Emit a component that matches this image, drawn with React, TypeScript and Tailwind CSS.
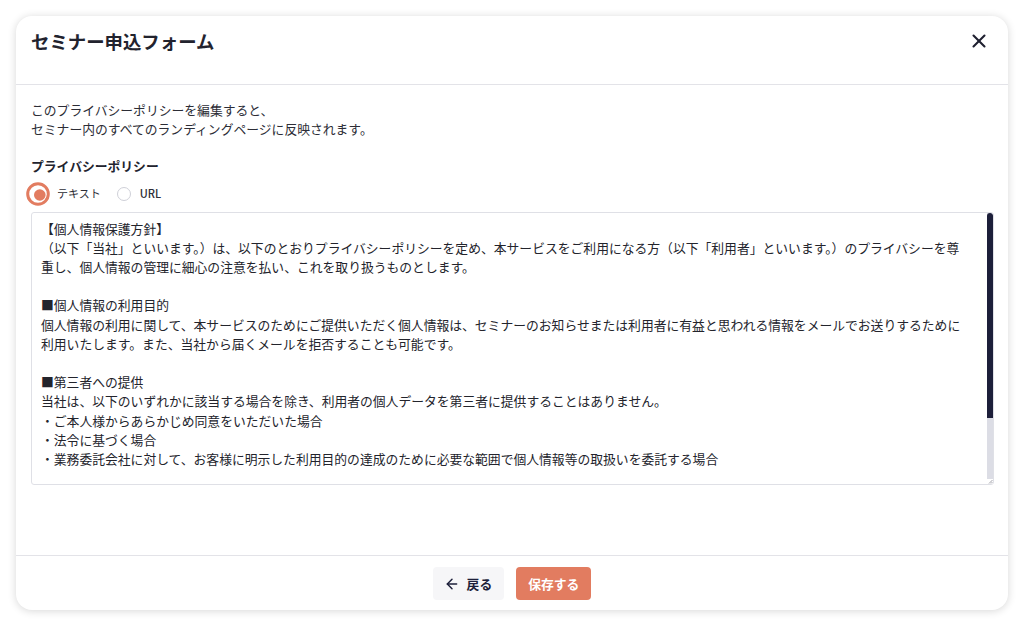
import { ArrowLeft, X } from 'lucide-react'

const POLICY = [
  '【個人情報保護方針】',
  '（以下「当社」といいます。）は、以下のとおりプライバシーポリシーを定め、本サービスをご利用になる方（以下「利用者」といいます。）のプライバシーを尊',
  '重し、個人情報の管理に細心の注意を払い、これを取り扱うものとします。',
  '',
  '■個人情報の利用目的',
  '個人情報の利用に関して、本サービスのためにご提供いただく個人情報は、セミナーのお知らせまたは利用者に有益と思われる情報をメールでお送りするために',
  '利用いたします。また、当社から届くメールを拒否することも可能です。',
  '',
  '■第三者への提供',
  '当社は、以下のいずれかに該当する場合を除き、利用者の個人データを第三者に提供することはありません。',
  '・ご本人様からあらかじめ同意をいただいた場合',
  '・法令に基づく場合',
  '・業務委託会社に対して、お客様に明示した利用目的の達成のために必要な範囲で個人情報等の取扱いを委託する場合',
].join('\n')

function RadioOn() {
  return (
    <svg width="24" height="24" viewBox="0 0 24 24" className="shrink-0">
      <circle cx="12" cy="12" r="10.3" fill="none" stroke="#e27c60" strokeWidth="3" />
      <circle cx="13.2" cy="12.6" r="7" fill="white" />
      <circle cx="13.8" cy="13" r="5.8" fill="#e27c60" />
    </svg>
  )
}

export default function App() {
  return (
    <div className="bg-white h-[625px] p-4 font-['Noto_Sans_CJK_JP','Noto_Sans',sans-serif]">
      <div className="h-[594px] flex flex-col bg-white rounded-2xl shadow-[0_1px_8px_rgba(0,0,0,0.16)] overflow-hidden">
        {/* ヘッダー */}
        <div className="h-[69px] shrink-0 flex items-start justify-between pl-[15px] pr-[18px] pt-[13px] border-b border-[#e3e3e8]">
          <h1 className="text-[18.4px] leading-[24px] font-bold text-[#22232e]">セミナー申込フォーム</h1>
          <button className="mt-[1px] text-[#1f2030]">
            <X size={22} strokeWidth={2.3} />
          </button>
        </div>

        {/* 本文 */}
        <div className="flex-1 pl-[15px] pt-[15px] pr-[14px]">
          <p className="text-[12.8px] leading-[19.2px] text-[#2c2d36]">
            このプライバシーポリシーを編集すると、<br />
            セミナー内のすべてのランディングページに反映されます。
          </p>

          <p className="mt-[18px] text-[12.8px] leading-[19.2px] font-bold text-[#22232e]">プライバシーポリシー</p>

          <div className="mt-[6px] h-[24px] flex items-center -ml-[5px] text-[11px] text-[#2c2d36]">
            <label className="flex items-center gap-[7px]">
              <RadioOn />
              <span>テキスト</span>
            </label>
            <label className="flex items-center gap-[9px] ml-[16px]">
              <span className="w-[14px] h-[14px] rounded-full border border-[#cfd0d8] bg-white" />
              <span className="font-medium">URL</span>
            </label>
          </div>

          {/* テキストエリア */}
          <div className="mt-[6px] h-[273px] flex border border-[#dfe0e6] rounded-[3px] overflow-hidden">
            <div className="flex-1 overflow-hidden whitespace-pre px-[9px] py-[6px] text-[12.8px] leading-[19.2px] text-[#23242c]">
              {POLICY}
            </div>
            <div className="w-[6px] shrink-0 flex flex-col">
              <div className="flex-1 flex flex-col bg-[#dcdde5]">
                <div className="h-[205px] bg-[#1d1f3a] rounded-t-full rounded-b-[2px]" />
              </div>
              <div className="h-[5px] bg-white flex items-end justify-end">
                <svg width="5" height="5" viewBox="0 0 5 5">
                  <path d="M4.5 1 L1 4.5 M4.5 3 L3 4.5" stroke="#8a8b94" strokeWidth="0.8" />
                </svg>
              </div>
            </div>
          </div>
        </div>

        {/* フッター */}
        <div className="h-[55px] shrink-0 border-t border-[#e3e3e8] flex items-center justify-center gap-3 pt-[1px]">
          <button className="h-[33px] pl-[11px] pr-[12px] flex items-center gap-[7px] rounded-[4px] bg-[#f6f6f8] text-[12.8px] font-bold text-[#1d1f3a]">
            <ArrowLeft size={16} strokeWidth={2.2} />
            戻る
          </button>
          <button className="h-[33px] px-[12px] rounded-[4px] bg-[#e27c60] text-[12.8px] font-bold text-white">
            保存する
          </button>
        </div>
      </div>
    </div>
  )
}
